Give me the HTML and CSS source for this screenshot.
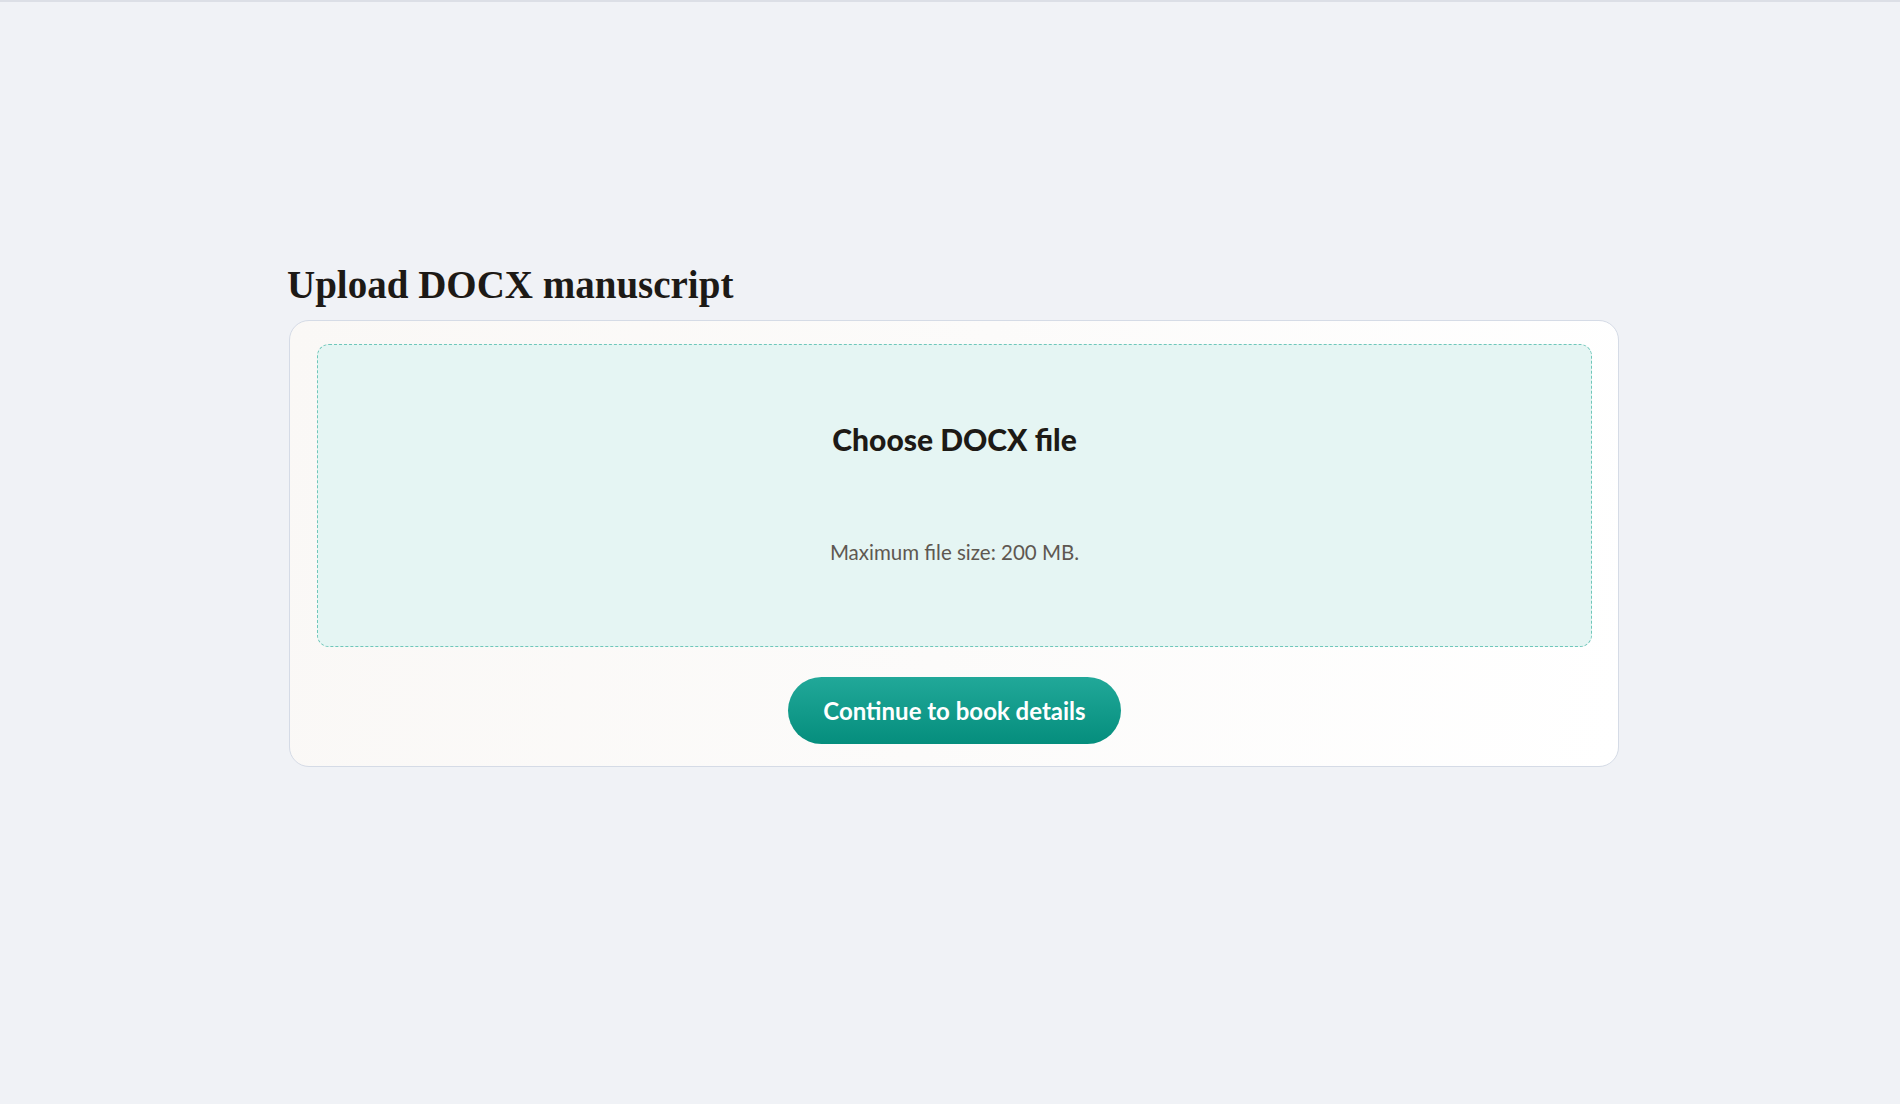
FILE: index.html
```html
<!DOCTYPE html>
<html lang="en">
<head>
    <meta charset="UTF-8">
    <meta name="viewport" content="width=device-width, initial-scale=1.0">
    <title>Upload manuscript</title>
    <link rel="stylesheet" href="styles.css">
</head>
<body>
    <main class="page">
        <h1 class="page-title">Upload DOCX manuscript</h1>
        <section class="upload-card">
            <label class="dropzone" for="docx">
                <input type="file" id="docx" accept=".docx">
                <span class="dropzone-title">Choose DOCX file</span>
                <span class="dropzone-hint">Maximum file size: 200 MB.</span>
            </label>
            <div class="actions">
                <button class="primary-btn">Continue to book details</button>
            </div>
        </section>
    </main>
</body>
</html>
```

FILE: styles.css
```css
body {
    margin: 0;
    font-family: Lato, "Open Sans", sans-serif;
    background-color: #f0f2f6;
    color: #1d1a16;
    border-top: 2px solid #dcdfe6;
    min-height: 1102px;
}
.page {
    box-sizing: border-box;
    width: 1338px;
    margin: 0 auto;
    padding: 259px 0 0 8px;
}
.page-title {
    margin: 0 0 12px -2px;
    font-family: "Liberation Serif", serif;
    font-weight: bold;
    font-size: 39px;
    line-height: 47px;
    color: #1d1a16;
}
.upload-card {
    background: linear-gradient(100deg, #faf8f6 0%, #fcfbfa 50%, #ffffff 100%);
    border: 1px solid #d5dbe6;
    border-radius: 20px;
    padding: 23px 26px 22px 27px;
}
.dropzone {
    display: flex;
    flex-direction: column;
    align-items: center;
    background-color: #e5f5f3;
    border: 1px dashed #6fc7ba;
    border-radius: 12px;
    padding: 76px 20px 81px;
    cursor: pointer;
}
.dropzone input {
    display: none;
}
.dropzone-title {
    font-weight: 900;
    font-size: 30px;
    line-height: 36px;
    color: #1d1a16;
    margin-bottom: 83px;
}
.dropzone-hint {
    font-size: 20.5px;
    line-height: 25px;
    color: #5e5851;
}
.actions {
    display: flex;
    justify-content: center;
    margin-top: 30px;
}
.primary-btn {
    height: 67px;
    padding: 0 35px;
    border: none;
    border-radius: 34px;
    background: linear-gradient(180deg, #21a899 0%, #058e7d 100%);
    color: #ffffff;
    font-family: Lato, "Open Sans", sans-serif;
    font-weight: bold;
    font-size: 24px;
    cursor: pointer;
}
```
